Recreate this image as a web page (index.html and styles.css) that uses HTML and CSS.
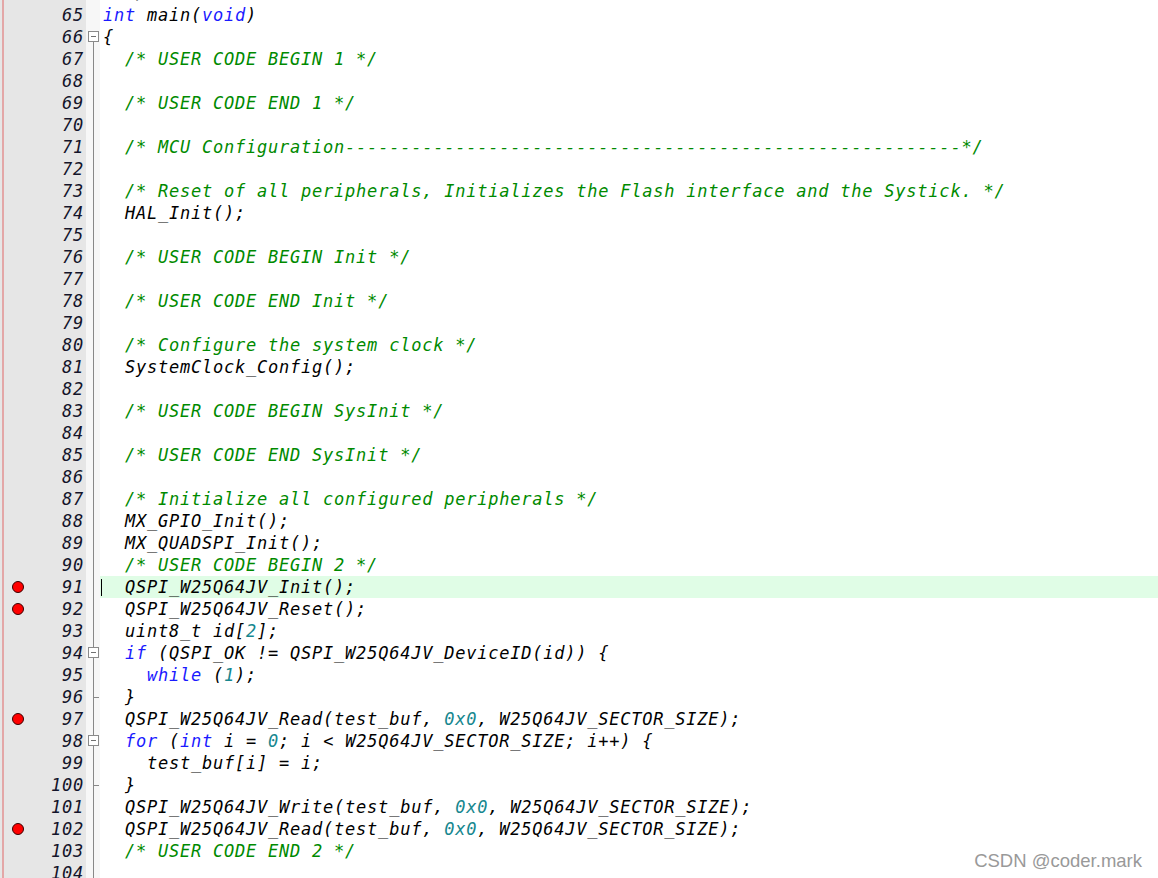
FILE: index.html
```html
<!DOCTYPE html>
<html lang="en">
<head>
    <meta charset="UTF-8">
    <title>main.c</title>
    <link rel="stylesheet" href="styles.css">
</head>
<body>
    <div class="editor">
        <div class="row"><div class="gut"><span class="num">64</span></div><div class="fold"></div><div class="code">  */</div></div>
        <div class="row"><div class="gut"><span class="num">65</span></div><div class="fold"></div><div class="code"><span class="k">int</span> main(<span class="k">void</span>)</div></div>
        <div class="row"><div class="gut"><span class="num">66</span></div><div class="fold start"><span class="box"></span></div><div class="code">{</div></div>
        <div class="row"><div class="gut"><span class="num">67</span></div><div class="fold v"></div><div class="code">  <span class="c">/* USER CODE BEGIN 1 */</span></div></div>
        <div class="row"><div class="gut"><span class="num">68</span></div><div class="fold v"></div><div class="code"></div></div>
        <div class="row"><div class="gut"><span class="num">69</span></div><div class="fold v"></div><div class="code">  <span class="c">/* USER CODE END 1 */</span></div></div>
        <div class="row"><div class="gut"><span class="num">70</span></div><div class="fold v"></div><div class="code"></div></div>
        <div class="row"><div class="gut"><span class="num">71</span></div><div class="fold v"></div><div class="code">  <span class="c">/* MCU Configuration--------------------------------------------------------*/</span></div></div>
        <div class="row"><div class="gut"><span class="num">72</span></div><div class="fold v"></div><div class="code"></div></div>
        <div class="row"><div class="gut"><span class="num">73</span></div><div class="fold v"></div><div class="code">  <span class="c">/* Reset of all peripherals, Initializes the Flash interface and the Systick. */</span></div></div>
        <div class="row"><div class="gut"><span class="num">74</span></div><div class="fold v"></div><div class="code">  HAL_Init();</div></div>
        <div class="row"><div class="gut"><span class="num">75</span></div><div class="fold v"></div><div class="code"></div></div>
        <div class="row"><div class="gut"><span class="num">76</span></div><div class="fold v"></div><div class="code">  <span class="c">/* USER CODE BEGIN Init */</span></div></div>
        <div class="row"><div class="gut"><span class="num">77</span></div><div class="fold v"></div><div class="code"></div></div>
        <div class="row"><div class="gut"><span class="num">78</span></div><div class="fold v"></div><div class="code">  <span class="c">/* USER CODE END Init */</span></div></div>
        <div class="row"><div class="gut"><span class="num">79</span></div><div class="fold v"></div><div class="code"></div></div>
        <div class="row"><div class="gut"><span class="num">80</span></div><div class="fold v"></div><div class="code">  <span class="c">/* Configure the system clock */</span></div></div>
        <div class="row"><div class="gut"><span class="num">81</span></div><div class="fold v"></div><div class="code">  SystemClock_Config();</div></div>
        <div class="row"><div class="gut"><span class="num">82</span></div><div class="fold v"></div><div class="code"></div></div>
        <div class="row"><div class="gut"><span class="num">83</span></div><div class="fold v"></div><div class="code">  <span class="c">/* USER CODE BEGIN SysInit */</span></div></div>
        <div class="row"><div class="gut"><span class="num">84</span></div><div class="fold v"></div><div class="code"></div></div>
        <div class="row"><div class="gut"><span class="num">85</span></div><div class="fold v"></div><div class="code">  <span class="c">/* USER CODE END SysInit */</span></div></div>
        <div class="row"><div class="gut"><span class="num">86</span></div><div class="fold v"></div><div class="code"></div></div>
        <div class="row"><div class="gut"><span class="num">87</span></div><div class="fold v"></div><div class="code">  <span class="c">/* Initialize all configured peripherals */</span></div></div>
        <div class="row"><div class="gut"><span class="num">88</span></div><div class="fold v"></div><div class="code">  MX_GPIO_Init();</div></div>
        <div class="row"><div class="gut"><span class="num">89</span></div><div class="fold v"></div><div class="code">  MX_QUADSPI_Init();</div></div>
        <div class="row"><div class="gut"><span class="num">90</span></div><div class="fold v"></div><div class="code">  <span class="c">/* USER CODE BEGIN 2 */</span></div></div>
        <div class="row"><div class="gut"><span class="bp"></span><span class="num">91</span></div><div class="fold v"></div><div class="code current">  QSPI_W25Q64JV_Init();</div></div>
        <div class="row"><div class="gut"><span class="bp"></span><span class="num">92</span></div><div class="fold v"></div><div class="code">  QSPI_W25Q64JV_Reset();</div></div>
        <div class="row"><div class="gut"><span class="num">93</span></div><div class="fold v"></div><div class="code">  uint8_t id[<span class="n">2</span>];</div></div>
        <div class="row"><div class="gut"><span class="num">94</span></div><div class="fold v"><span class="box"></span></div><div class="code">  <span class="k">if</span> (QSPI_OK != QSPI_W25Q64JV_DeviceID(id)) {</div></div>
        <div class="row"><div class="gut"><span class="num">95</span></div><div class="fold v"></div><div class="code">    <span class="k">while</span> (<span class="n">1</span>);</div></div>
        <div class="row"><div class="gut"><span class="num">96</span></div><div class="fold v end"></div><div class="code">  }</div></div>
        <div class="row"><div class="gut"><span class="bp"></span><span class="num">97</span></div><div class="fold v"></div><div class="code">  QSPI_W25Q64JV_Read(test_buf, <span class="n">0x0</span>, W25Q64JV_SECTOR_SIZE);</div></div>
        <div class="row"><div class="gut"><span class="num">98</span></div><div class="fold v"><span class="box"></span></div><div class="code">  <span class="k">for</span> (<span class="k">int</span> i = <span class="n">0</span>; i &lt; W25Q64JV_SECTOR_SIZE; i++) {</div></div>
        <div class="row"><div class="gut"><span class="num">99</span></div><div class="fold v"></div><div class="code">    test_buf[i] = i;</div></div>
        <div class="row"><div class="gut"><span class="num">100</span></div><div class="fold v end"></div><div class="code">  }</div></div>
        <div class="row"><div class="gut"><span class="num">101</span></div><div class="fold v"></div><div class="code">  QSPI_W25Q64JV_Write(test_buf, <span class="n">0x0</span>, W25Q64JV_SECTOR_SIZE);</div></div>
        <div class="row"><div class="gut"><span class="bp"></span><span class="num">102</span></div><div class="fold v"></div><div class="code">  QSPI_W25Q64JV_Read(test_buf, <span class="n">0x0</span>, W25Q64JV_SECTOR_SIZE);</div></div>
        <div class="row"><div class="gut"><span class="num">103</span></div><div class="fold v"></div><div class="code">  <span class="c">/* USER CODE END 2 */</span></div></div>
        <div class="row"><div class="gut"><span class="num">104</span></div><div class="fold v"></div><div class="code"></div></div>
    </div>

    <div class="watermark">CSDN @coder.mark</div>
</body>
</html>
```

FILE: styles.css
```css
html, body {
    margin: 0;
    height: 100%;
    overflow: hidden;
    background: #ffffff;
}

.editor {
    margin-top: -18px;
    font-family: "DejaVu Sans Mono", monospace;
    font-style: italic;
    font-size: 17px;
    letter-spacing: 0.77px;
    line-height: 22px;
    color: #000000;
}

.row {
    display: flex;
    height: 22px;
}

.gut {
    width: 86px;
    flex: none;
    display: flex;
    align-items: center;
    box-sizing: border-box;
    padding-left: 12px;
    padding-right: 2px;
    background:
        linear-gradient(#e3a7a7, #e3a7a7) no-repeat 2px 0 / 2px 100%,
        #e6e6e6;
}

.num {
    margin-left: auto;
    color: #14142a;
}

.bp {
    width: 10px;
    height: 10px;
    border-radius: 50%;
    background: #ff0000;
    border: 1px solid #3a0000;
}

.fold {
    width: 14px;
    flex: none;
    position: relative;
    background-color: #f7f7f7;
}

.fold.v {
    background-image: linear-gradient(#888888, #888888);
    background-repeat: no-repeat;
    background-position: 7px 0;
    background-size: 1px 100%;
}

.fold.start {
    background-image: linear-gradient(#888888, #888888);
    background-repeat: no-repeat;
    background-position: 7px 11px;
    background-size: 1px 11px;
}

.fold .box {
    position: absolute;
    left: 2px;
    top: 5px;
    width: 9px;
    height: 9px;
    border: 1px solid #8a8a8a;
    background: #ffffff;
}

.fold .box::after {
    content: "";
    position: absolute;
    left: 2px;
    top: 4px;
    width: 5px;
    height: 1px;
    background: #707070;
}

.fold.end::after {
    content: "";
    position: absolute;
    left: 7px;
    top: 11px;
    width: 6px;
    height: 1px;
    background: #888888;
}

.code {
    flex: 1;
    padding-left: 3px;
    white-space: pre;
    position: relative;
}

.current {
    background: #e0fde6;
}

.current::before {
    content: "";
    position: absolute;
    left: 1px;
    top: 3px;
    width: 1px;
    height: 17px;
    background: #000000;
}

.k {
    color: #1a1aff;
}

.c {
    color: #008a00;
}

.n {
    color: #17878f;
}

.watermark {
    position: absolute;
    right: 16px;
    bottom: 8px;
    font-family: "Liberation Sans", Arial, sans-serif;
    font-size: 18.5px;
    line-height: 1;
    color: #999999;
    text-shadow: 0 0 1px #ffffff;
}
```
